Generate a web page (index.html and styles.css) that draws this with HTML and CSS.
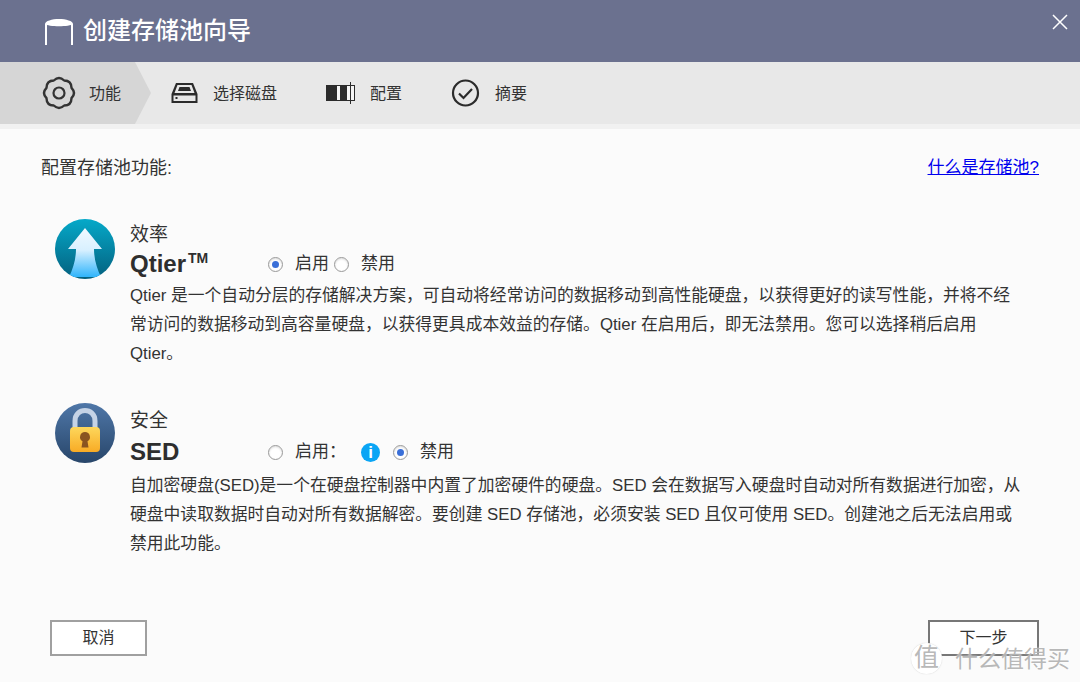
FILE: index.html
```html
<!DOCTYPE html>
<html lang="zh-CN">
<head>
    <meta charset="UTF-8">
    <title>创建存储池向导</title>
    <link rel="stylesheet" href="styles.css">
</head>
<body>
    <div class="wizard">
        <header class="title-bar">
            <svg class="title-icon" width="30" height="28" viewBox="0 0 30 28" fill="none">
                <path d="M2 27V6M28 27V6" stroke="#fff" stroke-width="2"/>
                <path d="M1 6C4 9 26 9 29 6C29 3 22 1 15 1S1 3 1 6Z" fill="#fff"/>
            </svg>
            <h1>创建存储池向导</h1>
            <svg class="close-icon" width="18" height="18" viewBox="0 0 18 18">
                <path d="M2 2L16 16M16 2L2 16" stroke="#fff" stroke-width="1.500"/>
            </svg>
        </header>

        <nav class="steps">
            <div class="step step-active">
                <svg width="34" height="34" viewBox="0 0 34 34" fill="none" stroke="#333" stroke-width="2.400">
                    <path d="M11.800 4.500Q17 -0.500 22.200 4.500Q29.400 4.600 29.500 11.800Q34.500 17 29.500 22.200Q29.400 29.400 22.200 29.500Q17 34.500 11.800 29.500Q4.600 29.400 4.500 22.200Q-0.500 17 4.500 11.800Q4.600 4.600 11.800 4.500Z" stroke-linejoin="round"/>
                    <circle cx="17" cy="17" r="5.500" stroke-width="2.200"/>
                </svg>
                <span>功能</span>
            </div>
            <div class="step step-disk">
                <svg width="27" height="22" viewBox="0 0 27 22">
                    <path d="M5 1H22L26.500 12V21H0.500V12Z" fill="#2b2b2b"/>
                    <path d="M6.500 3H20.500L23.500 11H3.500Z" fill="#e8e8e8"/>
                    <path d="M8.500 5H18.500L20 9H7Z" fill="#2b2b2b"/>
                    <path d="M2.500 13.500H24.500V19H2.500Z" fill="#e8e8e8"/>
                    <rect x="4.500" y="15" width="2" height="2" fill="#2b2b2b"/>
                </svg>
                <span>选择磁盘</span>
            </div>
            <div class="step step-config">
                <svg width="29" height="22" viewBox="0 0 29 22">
                    <rect x="0.500" y="3.500" width="28" height="15" fill="#f4f4f4" stroke="#2b2b2b"/>
                    <rect x="0" y="3" width="11" height="16" fill="#2b2b2b"/>
                    <rect x="14" y="3" width="7" height="16" fill="#2b2b2b"/>
                    <path d="M24.500 0V22" stroke="#2b2b2b"/>
                </svg>
                <span>配置</span>
            </div>
            <div class="step step-summary">
                <svg width="29" height="28" viewBox="0 0 28 28" fill="none" stroke="#2b2b2b">
                    <circle cx="14" cy="14" r="12.500" stroke-width="2.200"/>
                    <path d="M7.500 14.500L12 19L20.500 10" stroke-width="2.200"/>
                </svg>
                <span>摘要</span>
            </div>
        </nav>
        <div class="steps-edge"></div>

        <main class="content">
            <div class="intro">
                <span>配置存储池功能:</span>
                <a href="#">什么是存储池?</a>
            </div>

            <section class="feature">
                <svg class="feature-icon" width="60" height="60" viewBox="0 0 60 60">
                    <defs>
                        <linearGradient id="tealBg" x1="0" y1="0" x2="0" y2="1">
                            <stop offset="0" stop-color="#05a9c9"/>
                            <stop offset="1" stop-color="#04607e"/>
                        </linearGradient>
                        <linearGradient id="arrowFill" x1="0" y1="0" x2="0" y2="1">
                            <stop offset="0" stop-color="#f0f9ff"/>
                            <stop offset="0.450" stop-color="#d8f0ff"/>
                            <stop offset="1" stop-color="#2fb4fb"/>
                        </linearGradient>
                        <clipPath id="discClip">
                            <circle cx="30" cy="30" r="30"/>
                        </clipPath>
                    </defs>
                    <circle cx="30" cy="30" r="30" fill="url(#tealBg)"/>
                    <path clip-path="url(#discClip)" d="M30 9L47 30H39C39 40 42 50 46 58H14C18 50 21 40 21 30H13Z" fill="url(#arrowFill)"/>
                </svg>
                <div class="feature-body">
                    <div class="feature-kind">效率</div>
                    <div class="feature-head">
                        <span class="feature-name">Qtier<sup>TM</sup></span>
                        <div class="options">
                            <span class="radio radio-on"></span><span>启用</span>
                            <span class="radio radio-next"></span><span>禁用</span>
                        </div>
                    </div>
                    <p>Qtier 是一个自动分层的存储解决方案，可自动将经常访问的数据移动到高性能硬盘，以获得更好的读写性能，并将不经常访问的数据移动到高容量硬盘，以获得更具成本效益的存储。Qtier 在启用后，即无法禁用。您可以选择稍后启用 Qtier。</p>
                </div>
            </section>

            <section class="feature feature-sed">
                <svg class="feature-icon" width="60" height="60" viewBox="0 0 60 60">
                    <defs>
                        <linearGradient id="blueBg" x1="0" y1="0" x2="0" y2="1">
                            <stop offset="0" stop-color="#4f77a8"/>
                            <stop offset="1" stop-color="#28466a"/>
                        </linearGradient>
                        <linearGradient id="lockFill" x1="0" y1="0" x2="0" y2="1">
                            <stop offset="0" stop-color="#fdd75c"/>
                            <stop offset="1" stop-color="#f8ab25"/>
                        </linearGradient>
                    </defs>
                    <circle cx="30" cy="30" r="30" fill="url(#blueBg)"/>
                    <path d="M20 26V18C20 4 40 4 40 18V26" fill="none" stroke="#c5d3e6" stroke-width="5"/>
                    <rect x="15" y="24" width="30" height="25" rx="4" fill="url(#lockFill)"/>
                    <path d="M30 29A5 5 0 0 1 32.500 38.300L33.500 44.500H26.500L27.500 38.300A5 5 0 0 1 30 29Z" fill="#8a5420"/>
                </svg>
                <div class="feature-body">
                    <div class="feature-kind">安全</div>
                    <div class="feature-head">
                        <span class="feature-name">SED</span>
                        <div class="options">
                            <span class="radio"></span><span>启用：</span>
                            <span class="info">i</span>
                            <span class="radio radio-on radio-after-info"></span><span>禁用</span>
                        </div>
                    </div>
                    <p>自加密硬盘(SED)是一个在硬盘控制器中内置了加密硬件的硬盘。SED 会在数据写入硬盘时自动对所有数据进行加密，从硬盘中读取数据时自动对所有数据解密。要创建 SED 存储池，必须安装 SED 且仅可使用 SED。创建池之后无法启用或禁用此功能。</p>
                </div>
            </section>
        </main>

        <footer class="buttons">
            <button type="button" class="btn-cancel">取消</button>
            <button type="button" class="btn-next">下一步</button>
        </footer>
    </div>

    <div class="watermark">
        <span class="watermark-badge">值</span>
        <span class="watermark-text">什么值得买</span>
    </div>
</body>
</html>
```

FILE: styles.css
```css
html, body {
    height: 682px;
    overflow: hidden;
}

body {
    margin: 0;
    font-family: "Liberation Sans", "Noto Sans CJK SC", sans-serif;
    font-size: 16px;
    color: #333;
    background-color: #fbfbfb;
}

.wizard {
    display: flex;
    flex-direction: column;
    height: 682px;
}

.title-bar {
    display: flex;
    align-items: center;
    height: 62px;
    padding-left: 44px;
    box-sizing: border-box;
    background-color: #6b718f;
    color: #fff;
}

.title-bar h1 {
    margin: 0 0 6px 9px;
    font-size: 24px;
    font-weight: 500;
}

.title-icon {
    margin-top: 2px;
}

.close-icon {
    margin-left: auto;
    margin-right: 11px;
    margin-bottom: 19px;
}

.steps {
    display: flex;
    height: 62px;
    background-color: #e8e8e8;
}

.steps-edge {
    height: 5px;
    background-color: #f1f1f1;
}

.step {
    display: flex;
    align-items: center;
    gap: 15px;
}

.step span {
    margin-bottom: 3px;
}

.step-active {
    width: 135px;
    padding-left: 42px;
    gap: 13px;
    box-sizing: border-box;
    background-color: #d6d6d6;
    position: relative;
}

.step-active::after {
    content: "";
    position: absolute;
    left: 135px;
    top: 0;
    border-left: 16px solid #d6d6d6;
    border-top: 31px solid transparent;
    border-bottom: 31px solid transparent;
}

.step-disk {
    padding-left: 36px;
}

.step-config,
.step-summary {
    padding-left: 49px;
}

.content {
    flex: 1;
    padding: 26px 41px 0 41px;
}

.intro {
    display: flex;
    justify-content: space-between;
    font-size: 18px;
    line-height: 26px;
}

.intro a {
    color: #0000ee;
    font-size: 17px;
}

.feature {
    display: flex;
    gap: 15px;
    margin-top: 38px;
    padding: 0 14px 0 14px;
}

.feature-sed {
    margin-top: 35px;
}

.feature-icon {
    flex: none;
}

.feature-body {
    flex: 1;
}

.feature-kind {
    font-size: 19px;
    line-height: 32px;
    height: 28px;
}

.feature-head {
    display: flex;
    align-items: center;
    height: 34px;
}

.feature-sed .feature-kind {
    margin-top: 2px;
}

.feature-sed .feature-head {
    height: 38px;
}

.feature-name {
    width: 138px;
    font-size: 24px;
    font-weight: 700;
    color: #2e2e2e;
}

.feature-name sup {
    margin-left: 2px;
    font-size: 14px;
    line-height: 0;
    vertical-align: 9px;
}

.options {
    display: flex;
    align-items: center;
    font-size: 17px;
}

.options span {
    line-height: 20px;
}

.radio {
    width: 13px;
    height: 13px;
    margin-right: 12px;
    border: 1px solid #999;
    border-radius: 50%;
    box-shadow: inset 0 1px 2px rgba(0, 0, 0, 0.15);
    background-color: #fff;
    position: relative;
}

.radio-next {
    margin-left: 5px;
}

.radio-after-info {
    margin-left: 13px;
}

.radio-on::after {
    content: "";
    position: absolute;
    left: 3px;
    top: 3px;
    width: 7px;
    height: 7px;
    border-radius: 50%;
    background-color: #3a6fd8;
}

.options .info {
    width: 19px;
    height: 19px;
    margin-left: 15px;
    border-radius: 50%;
    background-color: #0aa5f5;
    color: #fff;
    font-weight: 700;
    font-size: 17px;
    line-height: 19px;
    text-align: center;
}

.feature p {
    margin: 0;
    line-height: 29px;
    font-size: 16.800px;
}

.buttons {
    display: flex;
    justify-content: space-between;
    padding: 0 41px 26px 50px;
}

.buttons button {
    height: 36px;
    padding: 0 0 4px;
    font-family: inherit;
    font-size: 16px;
    color: #333;
    background-color: #fff;
    cursor: pointer;
}

.btn-cancel {
    width: 97px;
    border: 2px solid #a0a0a0;
}

.btn-next {
    width: 111px;
    border: 2px solid #777;
}

.watermark {
    position: absolute;
    left: 911px;
    top: 640px;
    display: flex;
    align-items: center;
    gap: 13px;
    font-size: 23px;
    color: rgba(175, 175, 175, 0.9);
}

.watermark-text {
    margin-bottom: 3px;
    text-shadow: 0 0 2px rgba(255, 255, 255, 0.9);
}

.watermark-badge {
    width: 31px;
    height: 31px;
    border-radius: 50%;
    background-color: #fff;
    box-shadow: 0 0 1px rgba(150, 150, 150, 0.5);
    font-size: 25px;
    text-align: center;
    line-height: 28px;
}
```
